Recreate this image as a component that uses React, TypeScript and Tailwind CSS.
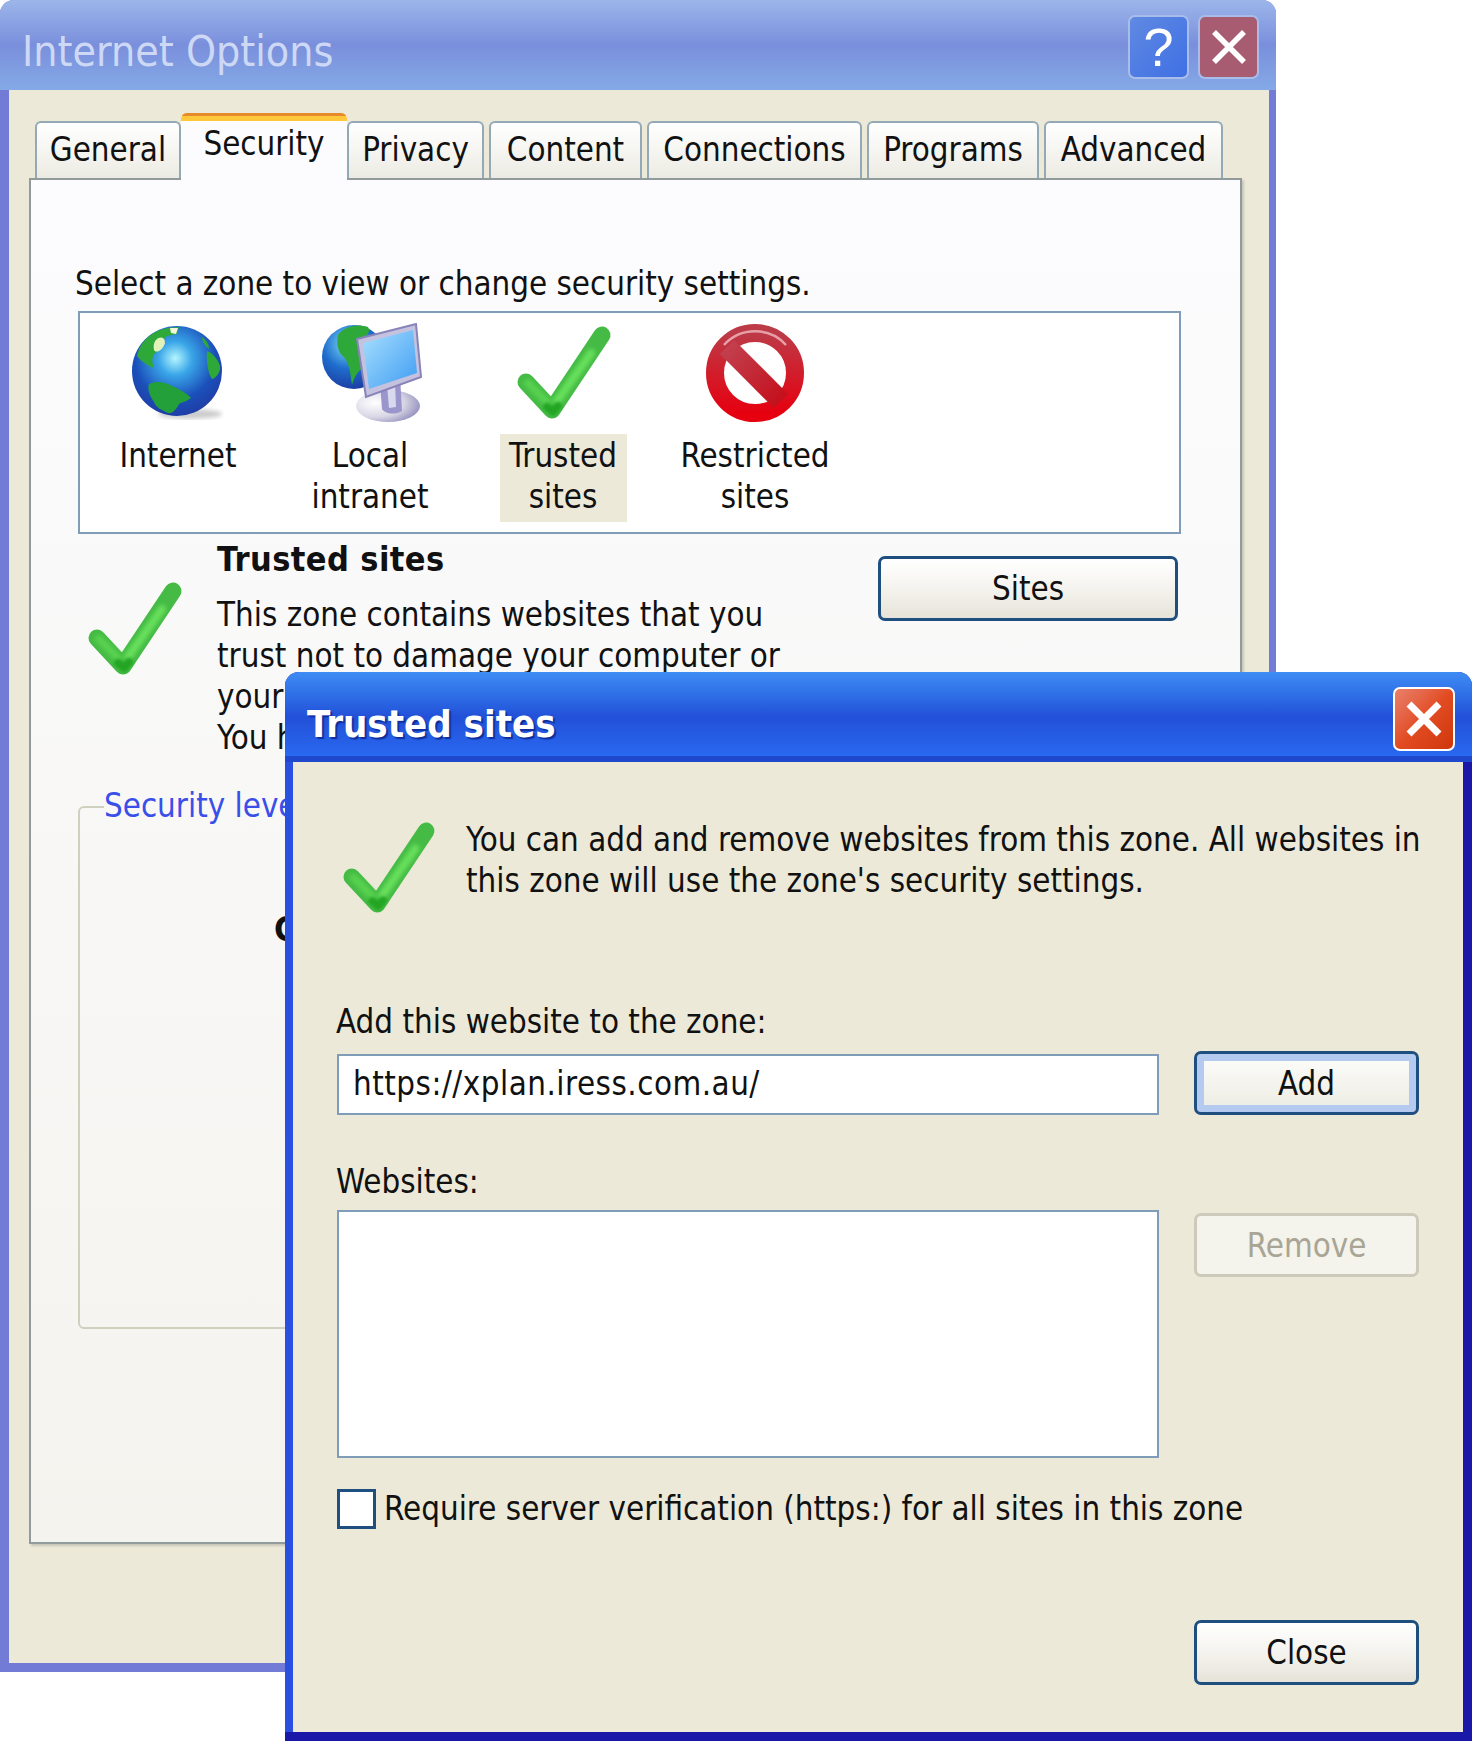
const tabs = [
  { label: 'General', width: 'w-[146px]' },
  { label: 'Security', width: 'w-[166px]', active: true },
  { label: 'Privacy', width: 'w-[137px]' },
  { label: 'Content', width: 'w-[153px]' },
  { label: 'Connections', width: 'w-[215px]' },
  { label: 'Programs', width: 'w-[172px]' },
  { label: 'Advanced', width: 'w-[179px]' },
];

function CheckIcon({ className }: { className?: string }) {
  return (
    <svg viewBox="0 0 92 92" className={`overflow-visible ${className ?? ''}`}>
      <path d="M9 55 L35 83 L85 8" fill="none" stroke="#45bb45" strokeWidth="17" strokeLinecap="round" strokeLinejoin="round" />
      <path d="M11 56 L30 75" fill="none" stroke="#58d24f" strokeWidth="8" strokeLinecap="round" className="blur-[2px]" />
      <path d="M40 74 L74 26" fill="none" stroke="#68e05c" strokeWidth="8" strokeLinecap="round" className="blur-[2px]" />
      <path d="M30 80 L36 85 L41 79" fill="none" stroke="#23a523" strokeWidth="8" strokeLinecap="round" strokeLinejoin="round" className="blur-[1.5px]" />
    </svg>
  );
}

function GlobeIcon({ className }: { className?: string }) {
  return (
    <svg viewBox="0 0 92 94" className={className}>
      <defs>
        <radialGradient id="globeSea" cx="48%" cy="36%" r="62%">
          <stop offset="0%" stopColor="#b4f6ff" />
          <stop offset="30%" stopColor="#3aa6e8" />
          <stop offset="72%" stopColor="#1b50ba" />
          <stop offset="100%" stopColor="#1f3fa8" />
        </radialGradient>
      </defs>
      <ellipse cx="58" cy="88" rx="32" ry="5" fill="#999" opacity="0.5" className="blur-[2px]" />
      <circle cx="45" cy="45" r="45" fill="url(#globeSea)" />
      <g className="blur-[0.7px]">
        <path d="M5 30C8 17 18 5 36 2L47 1L45 8L35 10C31 13 29 20 25 26C19 29 20 37 22 42C16 40 10 36 5 30Z" fill="#2fa83a" />
        <path d="M24 14C28 10 33 11 33 17C31 24 24 28 22 24C21 20 22 16 24 14Z" fill="#e3f2b8" />
        <path d="M38 2L46 2L44 8L39 7Z" fill="#f4f6d8" />
        <path d="M17 58C24 55 30 56 36 58C44 62 54 66 59 72C54 76 50 76 47 78C44 84 40 88 36 87C30 84 24 82 22 76C18 70 15 64 17 58Z" fill="#23a03a" />
        <path d="M75 25C82 28 86 34 88 40C89 46 84 52 80 53C76 48 74 34 75 25Z" fill="#2fa83a" />
        <path d="M70 11C74 14 77 18 77 23C73 20 70 16 70 11Z" fill="#2fa83a" />
      </g>
    </svg>
  );
}

function IntranetIcon({ className }: { className?: string }) {
  return (
    <svg viewBox="0 0 100 100" className={className}>
      <defs>
        <radialGradient id="intraSea" cx="40%" cy="30%" r="70%">
          <stop offset="0%" stopColor="#7fe0f8" />
          <stop offset="55%" stopColor="#1e6ccc" />
          <stop offset="100%" stopColor="#1d3fa5" />
        </radialGradient>
        <linearGradient id="intraScreen" x1="0" y1="0" x2="1" y2="1">
          <stop offset="0%" stopColor="#a8e0ff" />
          <stop offset="100%" stopColor="#3f9cf2" />
        </linearGradient>
        <radialGradient id="intraBase" cx="30%" cy="40%" r="75%">
          <stop offset="0%" stopColor="#ffffff" />
          <stop offset="60%" stopColor="#d8d6e4" />
          <stop offset="100%" stopColor="#8f8cbc" />
        </radialGradient>
      </defs>
      <circle cx="32" cy="34" r="32" fill="url(#intraSea)" />
      <path d="M16 12C22 4 34 0 46 4C50 10 42 14 38 18C42 26 46 34 42 44C36 48 32 54 30 62C28 50 28 42 22 34C16 30 14 20 16 12Z" fill="#2fa83a" className="blur-[0.7px]" />
      <ellipse cx="66" cy="83" rx="32" ry="16" fill="url(#intraBase)" />
      <path d="M58 60L78 52L80 88C72 93 62 90 60 86Z" fill="#9a96cc" />
      <path d="M65 62L73 59L74 84L67 85Z" fill="#d8d8ee" />
      <path d="M35 16L94 1L99 54L44 74Z" fill="#c4c2de" stroke="#8884ba" strokeWidth="2" />
      <path d="M41 20L91 7L95 50L47 66Z" fill="url(#intraScreen)" />
    </svg>
  );
}

function StopIcon({ className }: { className?: string }) {
  return (
    <svg viewBox="0 0 100 100" className={className}>
      <defs>
        <linearGradient id="stopRing" x1="0" y1="0" x2="0" y2="1">
          <stop offset="0%" stopColor="#bd3a47" />
          <stop offset="100%" stopColor="#e60010" />
        </linearGradient>
        <linearGradient id="stopBar" x1="0" y1="0" x2="1" y2="1">
          <stop offset="0%" stopColor="#c2404e" />
          <stop offset="100%" stopColor="#c4101c" />
        </linearGradient>
      </defs>
      <circle cx="50" cy="50" r="40" fill="#fff" stroke="url(#stopRing)" strokeWidth="18" />
      <path d="M19 22A42 42 0 0 1 81 22" fill="none" stroke="#e8a0a8" strokeWidth="2.5" className="blur-[0.6px]" />
      <path d="M22 24L76 78" stroke="url(#stopBar)" strokeWidth="20" />
    </svg>
  );
}

function XpButton({ children, className, focused, disabled }: { children: string; className?: string; focused?: boolean; disabled?: boolean }) {
  const look = disabled
    ? 'border-[#cdcabb] bg-[#f4f3ec] text-[#a8a595]'
    : focused
      ? 'border-[#1f4f7f] bg-gradient-to-b from-[#fdfdfb] to-[#ecebe2] text-[#111] shadow-[inset_0_0_0_7px_#b4caf0]'
      : 'border-[#1f4f7f] bg-gradient-to-b from-[#ffffff] via-[#f4f3ee] to-[#e6e4d8] text-[#111]';
  return <button className={`flex items-center justify-center rounded-[7px] border-[3px] pt-[2px] ${look} ${className ?? ''}`}>{children}</button>;
}

function Zone({ label, width, selected, children }: { label: string[]; width: string; selected?: boolean; children: React.ReactNode }) {
  return (
    <div className={`flex flex-col items-center ${width}`}>
      <div className="flex h-[100px] items-center justify-center">{children}</div>
      <div className={`mt-[11px] flex h-[88px] w-[127px] flex-col items-center whitespace-nowrap pt-[2px] leading-[41px] ${selected ? 'bg-[#ece9d8]' : ''}`}>
        {label.map((line) => (
          <span key={line}>{line}</span>
        ))}
      </div>
    </div>
  );
}

export default function App() {
  return (
    <div className="relative h-[1741px] w-[1472px] overflow-hidden bg-white text-[32.8px] leading-[41px] text-[#111] [font-family:'DejaVu_Sans_Condensed','DejaVu_Sans',sans-serif]">
      {/* Internet Options window, inactive */}
      <div className="absolute left-0 top-0 flex h-[1672px] w-[1276px] flex-col rounded-t-[14px] bg-[#727bd6]">
        <div className="flex h-[90px] shrink-0 items-center rounded-t-[14px] bg-gradient-to-b from-[#9cb6ea] via-[#7a8fdc] to-[#84a9e6] pl-[22px] pr-[17px]">
          <span className="flex-1 pt-[14px] text-[42.5px] leading-[50px] text-[#cdd8f5]">Internet Options</span>
          <div className="mt-[4px] flex gap-[9px]">
            <div className="flex h-[64px] w-[61px] items-center justify-center rounded-[7px] border-2 border-[#a9bdea] bg-gradient-to-br from-[#6089e2] to-[#3f6fe4] text-[54px] text-white [font-family:'Liberation_Sans',sans-serif]">?</div>
            <div className="flex h-[64px] w-[61px] items-center justify-center rounded-[7px] border-2 border-[#a9bdea] bg-[#a85c72]">
              <svg viewBox="0 0 36 36" className="h-[36px] w-[36px]">
                <path d="M3 3L33 33M33 3L3 33" stroke="#fff" strokeWidth="5.5" />
              </svg>
            </div>
          </div>
        </div>
        <div className="mb-[9px] ml-[9px] mr-[7px] flex-1 bg-[#ece9d8] pl-[20px] pt-[23px]">
          <div className="relative z-10 flex h-[65px] items-end pl-[6px]">
            {tabs.map((tab, i) =>
              tab.active ? (
                <div key={tab.label} className={`relative -mb-[2px] flex h-[67px] flex-col overflow-hidden rounded-t-[6px] bg-[#fcfcfe] ${tab.width}`}>
                  <div className="h-[8px] bg-[#ffc73c] [border-top:3px_solid_#e68b2c]" />
                  <div className="pt-[3px] text-center">{tab.label}</div>
                </div>
              ) : (
                <div key={tab.label} className={`h-[57px] rounded-t-[6px] border-x-2 border-t-2 border-[#93a9b6] bg-gradient-to-b from-[#ffffff] to-[#ecebe3] pt-[7px] text-center ${tab.width} ${i > 2 ? 'ml-[5px]' : ''}`}>
                  {tab.label}
                </div>
              ),
            )}
          </div>
          <div className="h-[1366px] w-[1213px] border-2 border-[#919b9c] bg-gradient-to-b from-[#fcfcfe] to-[#f4f3ee] pl-[47px] pt-[84px] shadow-[2px_2px_2px_#c8c6b8]">
            <div className="-ml-[3px]">Select a zone to view or change security settings.</div>
            <div className="mt-[6px] flex h-[223px] w-[1103px] border-2 border-[#7f9db9] bg-white pl-[2px] pt-[10px]">
              <Zone label={['Internet']} width="w-[192px]">
                <GlobeIcon className="h-[94px] w-[92px]" />
              </Zone>
              <Zone label={['Local', 'intranet']} width="w-[192px]">
                <IntranetIcon className="ml-[3px] h-[100px] w-[100px]" />
              </Zone>
              <Zone label={['Trusted', 'sites']} width="w-[194px]" selected>
                <CheckIcon className="h-[92px] w-[92px]" />
              </Zone>
              <Zone label={['Restricted', 'sites']} width="w-[190px]">
                <StopIcon className="h-[100px] w-[100px]" />
              </Zone>
            </div>
            <div className="mt-[5px] flex">
              <CheckIcon className="ml-[10px] mt-[44px] h-[92px] w-[92px] shrink-0" />
              <div className="ml-[37px] w-[620px] shrink-0 whitespace-nowrap">
                <div className="text-[34px] font-bold tracking-[0.4px]">Trusted sites</div>
                <div className="mt-[15px]">
                  <div>This zone contains websites that you</div>
                  <div>trust not to damage your computer or</div>
                  <div>your</div>
                  <div>You have</div>
                </div>
              </div>
              <XpButton className="ml-[41px] mt-[17px] h-[65px] w-[300px]">Sites</XpButton>
            </div>
            <fieldset className="mt-[27px] h-[543px] w-[1117px] rounded-[6px] border-2 border-[#d0d0bf] pl-[24px]">
              <legend className="text-[#3a4fe8]">Security level</legend>
              <div className="ml-[170px] mt-[82px] text-[34px] font-bold">Custom</div>
            </fieldset>
          </div>
        </div>
      </div>

      {/* Trusted sites dialog, active */}
      <div className="absolute left-[285px] top-[672px] flex h-[1069px] w-[1187px] flex-col rounded-t-[14px] bg-[#1a18a8]">
        <div className="flex h-[90px] shrink-0 items-center justify-between rounded-t-[14px] bg-gradient-to-b from-[#3f8cf4] via-[#2350d8] to-[#2a6cf4] pl-[22px] pr-[17px] shadow-[inset_0_-6px_0_#1f48cc]">
          <span className="pt-[14px] text-[38px] font-bold leading-[50px] text-white [text-shadow:2px_2px_1px_#0f2f9c]">Trusted sites</span>
          <div className="mt-[4px] flex h-[64px] w-[62px] items-center justify-center rounded-[7px] border-2 border-white bg-gradient-to-br from-[#e8806a] via-[#e24c22] to-[#cf3608]">
            <svg viewBox="0 0 36 36" className="h-[36px] w-[36px]">
              <path d="M3 3L33 33M33 3L3 33" stroke="#fff" strokeWidth="7" />
            </svg>
          </div>
        </div>
        <div className="mb-[9px] mr-[9px] flex flex-1 flex-col border-l-[8px] border-[#2a50e0] bg-[#ece9d8] pl-[44px] pr-[44px] pt-[58px]">
          <div className="flex h-[98px]">
            <CheckIcon className="ml-[6px] mt-[3px] h-[90px] w-[90px] shrink-0" />
            <div className="ml-[33px] whitespace-nowrap">
              <div>You can add and remove websites from this zone. All websites in</div>
              <div>this zone will use the zone's security settings.</div>
            </div>
          </div>
          <div className="-ml-[1px] mt-[84px]">Add this website to the zone:</div>
          <div className="mt-[8px] flex gap-[35px]">
            <div className="mt-[3px] flex h-[61px] w-[822px] items-center border-2 border-[#7f9db9] bg-white pl-[14px] tracking-[0.5px]">https://xplan.iress.com.au/</div>
            <XpButton focused className="h-[64px] w-[225px]">Add</XpButton>
          </div>
          <div className="-ml-[1px] mt-[47px]">Websites:</div>
          <div className="mt-[7px] flex gap-[35px]">
            <div className="h-[248px] w-[822px] border-2 border-[#7f9db9] bg-white" />
            <XpButton disabled className="mt-[3px] h-[64px] w-[225px]">Remove</XpButton>
          </div>
          <div className="mt-[30px] flex items-center gap-[8px]">
            <div className="h-[40px] w-[39px] border-[3px] border-[#1f4f7f] bg-white" />
            <span className="pt-[1px]">Require server verification (https:) for all sites in this zone</span>
          </div>
          <div className="mt-[90px] flex justify-end">
            <XpButton className="h-[65px] w-[225px]">Close</XpButton>
          </div>
        </div>
      </div>
    </div>
  );
}
